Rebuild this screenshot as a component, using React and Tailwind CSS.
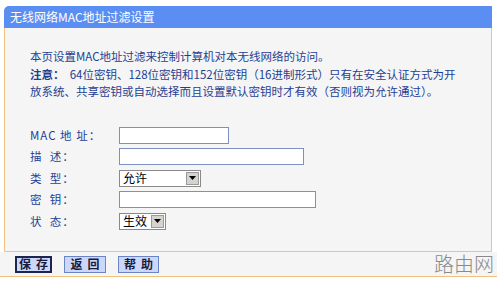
import React from 'react';

const cjk = { fontFamily: '"Noto Sans CJK SC", "Liberation Sans", sans-serif' };

function Field({ label, children }) {
  return (
    <div className="flex h-[21.5px] items-center">
      <div className="w-[89px] whitespace-pre text-[11.5px] tracking-[1px] text-[#1f3f93]">{label}</div>
      {children}
    </div>
  );
}

function TextBox({ w }) {
  return <div className={`h-[17px] border border-[#7f8fc4] bg-white ${w}`} />;
}

function Select({ w, value }) {
  return (
    <div className={`flex h-[17px] items-center border border-[#8a8a8a] bg-white ${w}`}>
      <span className="flex-1 pl-[3px] text-[12px] leading-none text-black">{value}</span>
      <span className="m-[1px] flex h-[13px] w-[13px] items-center justify-center border border-[#9a9a9a] bg-[#d6d3ce]">
        <svg width="7" height="4" viewBox="0 0 7 4"><path d="M0 0h7L3.5 4z" fill="#000" /></svg>
      </span>
    </div>
  );
}

function Btn({ children, primary }) {
  return (
    <div
      className={`flex h-[17px] items-center justify-center bg-[#ccd8fa] text-[12px] font-bold tracking-[5px] text-[#1a1a3a] ${
        primary ? 'border-2 border-[#1c2550]' : 'border border-[#6a84c8]'
      }`}
    >
      <span className="-mr-[5px]">{children}</span>
    </div>
  );
}

export default function App() {
  return (
    <div className="h-[281px] w-[500px] overflow-hidden bg-white" style={cjk}>
      <div className="pt-[6px]">
        <div className="ml-[4px] w-[488px] rounded-tl-[5px] bg-[#5b8ef2] pl-[6px] text-[12px] leading-[22px] text-white">
          无线网络MAC地址过滤设置
        </div>
        <div className="ml-[4px] h-[224px] w-[488px] border-x border-b border-[#f0c27e] bg-[#f5f5f5] pl-[25px] pt-[20px]">
          <div className="text-[11.5px] leading-[17.5px] text-[#1f3f93]">
            <div>本页设置MAC地址过滤来控制计算机对本无线网络的访问。</div>
            <div className="whitespace-pre">
              <span className="font-bold">注意：</span>
              {'  '}64位密钥、128位密钥和152位密钥（16进制形式）只有在安全认证方式为开
            </div>
            <div>放系统、共享密钥或自动选择而且设置默认密钥时才有效（否则视为允许通过）。</div>
          </div>
          <div className="mt-[24px] flex flex-col">
            <Field label="MAC 地 址：">
              <TextBox w="w-[110px]" />
            </Field>
            <Field label="描  述：">
              <TextBox w="w-[185px]" />
            </Field>
            <Field label="类  型：">
              <Select w="w-[82px]" value="允许" />
            </Field>
            <Field label="密  钥：">
              <TextBox w="w-[197px]" />
            </Field>
            <Field label="状  态：">
              <Select w="w-[47px]" value="生效" />
            </Field>
          </div>
        </div>
        <div className="flex h-[25px] w-[497px] items-center border-b border-[#f0c27e] bg-[#f5f5f5]">
          <div className="ml-[15px] flex gap-[12px]">
            <div className="w-[37px]">
              <Btn primary>保存</Btn>
            </div>
            <div className="w-[42px]">
              <Btn>返回</Btn>
            </div>
            <div className="w-[41px]">
              <Btn>帮助</Btn>
            </div>
          </div>
          <div className="ml-auto mr-[3px] text-[20px] font-light leading-none text-[#8a8a8a]">路由网</div>
        </div>
      </div>
    </div>
  );
}
